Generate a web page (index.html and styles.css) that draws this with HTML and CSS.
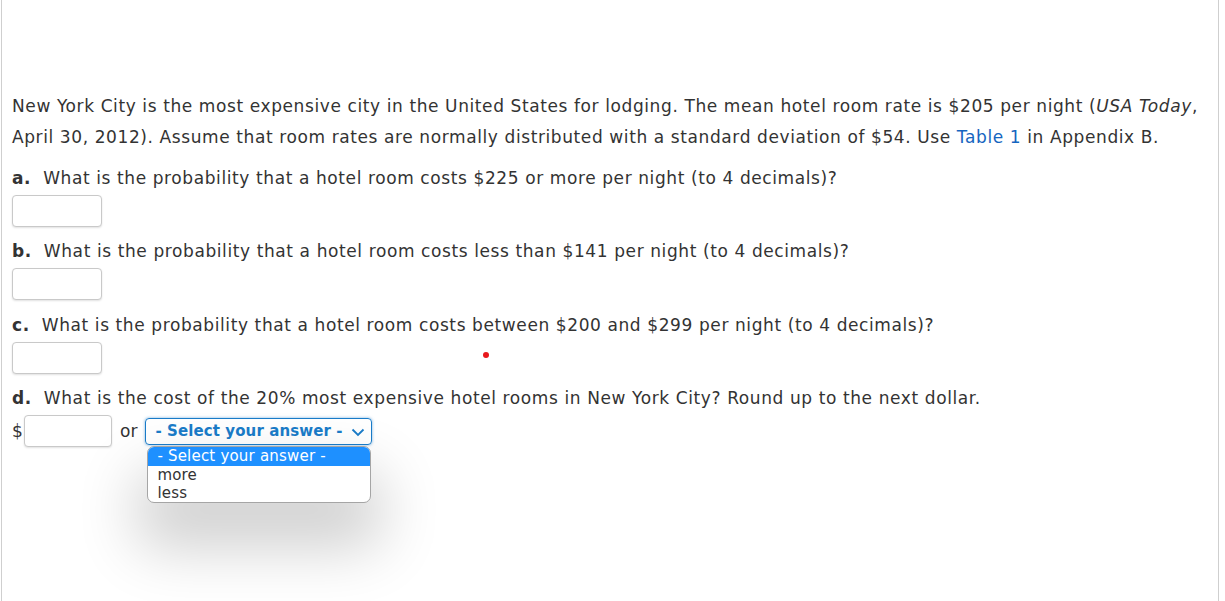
FILE: index.html
```html
<!DOCTYPE html>
<html>
<head>
<meta charset="utf-8">
<link rel="stylesheet" href="styles.css">
</head>
<body>
<div class="page">
  <p class="intro">New York City is the most expensive city in the United States for lodging. The mean hotel room rate is $205 per night (<i>USA Today</i>, April 30, 2012). Assume that room rates are normally distributed with a standard deviation of $54. Use <a class="link">Table 1</a> in Appendix B.</p>

  <div class="q qa"><b class="lbl">a.</b>What is the probability that a hotel room costs $225 or more per night (to 4 decimals)?</div>
  <div class="row"><span class="box"></span></div>

  <div class="q"><b class="lbl">b.</b>What is the probability that a hotel room costs less than $141 per night (to 4 decimals)?</div>
  <div class="row"><span class="box"></span></div>

  <div class="q qc"><b class="lbl">c.</b>What is the probability that a hotel room costs between $200 and $299 per night (to 4 decimals)?</div>
  <div class="row dotrow"><span class="box"></span><span class="dot"></span></div>

  <div class="q"><b class="lbl">d.</b>What is the cost of the 20% most expensive hotel rooms in New York City? Round up to the next dollar.</div>
  <div class="row drow">
    <span class="cur">$</span><span class="box box-d"></span><span class="or">or</span>
    <div class="selwrap">
      <div class="sel">- Select your answer -
        <svg class="chev" width="14" height="9" viewBox="0 0 14 9"><path d="M1.5 1.5 L7 7 L12.5 1.5" fill="none" stroke="#1a7cc9" stroke-width="1.8"/></svg>
      </div>
      <div class="list">
        <div class="opt hi">- Select your answer -</div>
        <div class="opt">more</div>
        <div class="opt">less</div>
      </div>
    </div>
  </div>
</div>
</body>
</html>
```
FILE: styles.css
```css
html, body { margin: 0; padding: 0; background: #fff; }
body {
  font-family: "DejaVu Sans", Verdana, sans-serif;
  font-size: 17px;
  letter-spacing: 0.6px;
  color: #333;
}
.page {
  margin-left: 1px;
  height: 601px;
  box-sizing: border-box;
  border-left: 1px solid #cfcfcf;
  border-right: 1px solid #cfcfcf;
  width: 1218px;
  padding: 91px 0 0 10px;
}
.intro {
  margin: 0;
  line-height: 31px;
}
.link { color: #1565c0; text-decoration: none; }
.q {
  margin-top: 9px;
  line-height: 31px;
}
.qa { margin-top: 10px; }
.qc { margin-top: 10px; }
.lbl { margin-right: 12px; font-weight: bold; }
.row {
  margin-top: 1px;
  height: 32px;
  display: flex;
  align-items: center;
  position: relative;
}
.box {
  display: block;
  width: 88px;
  height: 30px;
  border: 1px solid #c9c9c9;
  border-radius: 4px;
  box-shadow: 0 1px 2px rgba(0,0,0,0.12);
  background: #fff;
}
.dot {
  position: absolute;
  left: 471px;
  top: 10px;
  width: 6px;
  height: 6px;
  border-radius: 50%;
  background: #e8181c;
}
.drow { height: 32px; }
.cur { width: 12px; }
.box-d { width: 86px; }
.or { margin: 0 8px 0 8px; letter-spacing: 0; }
.selwrap { position: relative; }
.sel {
  box-sizing: border-box;
  width: 227px;
  height: 27px;
  border: 1px solid #1a7cc9;
  border-radius: 4px;
  box-shadow: 0 0 3px rgba(26,124,201,0.6);
  display: flex;
  align-items: center;
  padding-left: 9px;
  font-weight: bold;
  font-size: 15px;
  letter-spacing: 0.1px;
  color: #1a7cc9;
  position: relative;
}
.chev { position: absolute; right: 6px; top: 9px; }
.list {
  position: absolute;
  left: 2px;
  top: 28px;
  width: 224px;
  box-sizing: border-box;
  border: 1px solid #a5a5a5;
  border-radius: 7px;
  overflow: hidden;
  background: #fff;
  box-shadow: 0 35px 60px 10px rgba(0,0,0,0.19);
  font-size: 15px;
  letter-spacing: 0.2px;
  color: #333;
}
.opt {
  height: 18px;
  line-height: 18px;
  padding-left: 9px;
}
.opt.hi {
  height: 19px;
  line-height: 19px;
  background: #1e90ff;
  color: #fff;
  padding-left: 9px;
}
```
